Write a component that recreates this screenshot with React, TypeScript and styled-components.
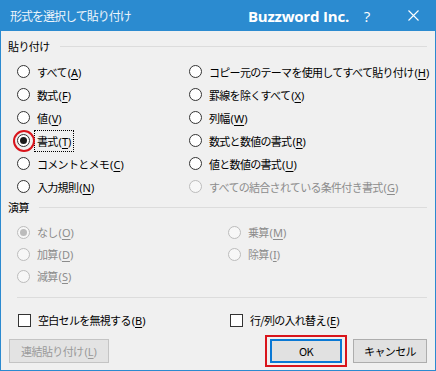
import React from 'react'
import styled, { createGlobalStyle } from 'styled-components'

const GlobalStyle = createGlobalStyle`
  body {
    margin: 0;
    background: #ffffff;
    font-family: "Noto Sans CJK JP", "Noto Sans", sans-serif;
  }
`

const Dialog = styled.div`
  width: 436px;
  height: 371px;
  box-sizing: border-box;
  border: 1px solid #2b8ad0;
  border-top: none;
  background: #f0f0f0;
  display: flex;
  flex-direction: column;
`

const TitleBar = styled.div`
  height: 31px;
  margin: 0 -1px;
  background: #2b8bd0;
  display: flex;
  align-items: center;
  padding: 0 0 0 10px;
  color: #ffffff;
`

const Title = styled.div`
  font-size: 12px;
  letter-spacing: -1px;
  color: #eef5fb;
  flex: 1;
`

const Brand = styled.div`
  font-family: "Open Sans", "Liberation Sans", sans-serif;
  font-weight: 700;
  font-size: 15px;
  letter-spacing: -0.2px;
  margin-right: 10px;
`

const TitleButton = styled.div<{ $w: number; $ml?: number }>`
  width: ${p => p.$w}px;
  margin-left: ${p => p.$ml ?? 0}px;
  height: 31px;
  display: flex;
  align-items: center;
  justify-content: center;
  font-family: "Open Sans", "Liberation Sans", sans-serif;
  font-size: 15px;
`

const Body = styled.div`
  flex: 1;
  display: flex;
  flex-direction: column;
  padding: 8px 8px 0 7px;
`

const SectionHead = styled.div<{ $top?: number }>`
  display: flex;
  align-items: center;
  height: 14px;
  margin-top: ${p => p.$top ?? 0}px;
  font-size: 11px;
  letter-spacing: -0.6px;
  color: #000;
  &::after {
    content: '';
    flex: 1;
    height: 1px;
    background: #dcdcdc;
    margin-left: 10px;
  }
`

const OptionGrid = styled.div<{ $col: number; $row: number; $rows: number }>`
  display: grid;
  grid-template-columns: ${p => p.$col}px 1fr;
  grid-template-rows: repeat(${p => p.$rows}, ${p => p.$row}px);
  grid-auto-flow: column;
  padding-left: 9px;
  margin-top: 7px;
`

const Option = styled.div<{ $disabled?: boolean }>`
  display: flex;
  align-items: center;
  gap: 7px;
  font-size: 11px;
  letter-spacing: -0.7px;
  color: ${p => (p.$disabled ? '#8c8c8c' : '#000')};
  white-space: nowrap;
`

const Key = styled.span`
  font-family: "Noto Sans", "Liberation Sans", sans-serif;
  letter-spacing: 0;
  margin-left: 1px;
  u {
    text-decoration-thickness: 1px;
    text-underline-offset: 2px;
  }
`

const Radio = styled.span<{ $checked?: boolean; $disabled?: boolean; $ring?: boolean }>`
  position: relative;
  flex: none;
  width: 13px;
  height: 13px;
  box-sizing: border-box;
  border-radius: 50%;
  border: 1px solid ${p => (p.$disabled ? '#bcbcbc' : '#333333')};
  background: ${p => (p.$disabled ? '#f7f7f7' : '#ffffff')};
  &::after {
    content: '';
    display: ${p => (p.$checked ? 'block' : 'none')};
    position: absolute;
    inset: 2px;
    border-radius: 50%;
    background: ${p => (p.$disabled ? '#bcbcbc' : '#1a1a1a')};
  }
  &::before {
    content: '';
    display: ${p => (p.$ring ? 'block' : 'none')};
    position: absolute;
    left: 50%;
    top: 50%;
    width: 22px;
    height: 22px;
    box-sizing: border-box;
    transform: translate(-50%, -50%);
    border: 2px solid #d9141b;
    border-radius: 50%;
  }
`

const Check = styled.span`
  flex: none;
  width: 13px;
  height: 13px;
  box-sizing: border-box;
  border: 1px solid #333333;
  background: #ffffff;
`

const Label = styled.span<{ $focus?: boolean }>`
  ${p => (p.$focus ? 'outline: 1px dotted #000; outline-offset: 2px;' : '')}
`

const Separator = styled.div`
  height: 1px;
  background: #dcdcdc;
  margin: 10px 0 0 9px;
`

const CheckRow = styled.div`
  display: grid;
  grid-template-columns: 212px 1fr;
  padding-left: 10px;
  margin-top: 14px;
  height: 16px;
`

const ButtonRow = styled.div`
  display: flex;
  align-items: center;
  margin-top: 7px;
  padding-left: 1px;
`

const Button = styled.button<{ $w: number; $disabled?: boolean; $default?: boolean }>`
  width: ${p => p.$w}px;
  height: 24px;
  box-sizing: border-box;
  font-family: "Noto Sans CJK JP", "Noto Sans", sans-serif;
  font-size: 11px;
  letter-spacing: -0.6px;
  padding: 0;
  background: ${p => (p.$disabled ? '#e3e3e3' : '#e1e1e1')};
  color: ${p => (p.$disabled ? '#9a9a9a' : '#000')};
  border: ${p => (p.$default ? '2px solid #0a78d4' : p.$disabled ? '1px solid #c4c4c4' : '1px solid #adadad')};
`

const Spacer = styled.div`
  flex: 1;
`

const Highlight = styled.div`
  padding: 2px 3px;
  border: 2px solid #d9141b;
  margin-right: 6px;
  display: flex;
`

type Item = { text: string; key: string; checked?: boolean; disabled?: boolean; ring?: boolean; focus?: boolean }

const paste: Item[] = [
  { text: 'すべて', key: 'A' },
  { text: '数式', key: 'F' },
  { text: '値', key: 'V' },
  { text: '書式', key: 'T', checked: true, ring: true, focus: true },
  { text: 'コメントとメモ', key: 'C' },
  { text: '入力規則', key: 'N' },
  { text: 'コピー元のテーマを使用してすべて貼り付け', key: 'H' },
  { text: '罫線を除くすべて', key: 'X' },
  { text: '列幅', key: 'W' },
  { text: '数式と数値の書式', key: 'R' },
  { text: '値と数値の書式', key: 'U' },
  { text: 'すべての結合されている条件付き書式', key: 'G', disabled: true },
]

const ops: Item[] = [
  { text: 'なし', key: 'O', checked: true, disabled: true },
  { text: '加算', key: 'D', disabled: true },
  { text: '減算', key: 'S', disabled: true },
  { text: '乗算', key: 'M', disabled: true },
  { text: '除算', key: 'I', disabled: true },
]

function AccessKey({ k }: { k: string }) {
  return (
    <Key>
      (<u>{k}</u>)
    </Key>
  )
}

function RadioOption({ item }: { item: Item }) {
  return (
    <Option $disabled={item.disabled}>
      <Radio $checked={item.checked} $disabled={item.disabled} $ring={item.ring} />
      <Label $focus={item.focus}>
        {item.text}
        <AccessKey k={item.key} />
      </Label>
    </Option>
  )
}

function App() {
  return (
    <Dialog>
      <GlobalStyle />
      <TitleBar>
        <Title>形式を選択して貼り付け</Title>
        <Brand>Buzzword Inc.</Brand>
        <TitleButton $w={16}>?</TitleButton>
        <TitleButton $w={46} $ml={15}>
          <svg width="11" height="11" viewBox="0 0 11 11">
            <path d="M0.5 0.5 L10.5 10.5 M10.5 0.5 L0.5 10.5" stroke="#ffffff" strokeWidth="1.1" />
          </svg>
        </TitleButton>
      </TitleBar>
      <Body>
        <SectionHead>貼り付け</SectionHead>
        <OptionGrid $col={172} $row={23} $rows={6}>
          {paste.map(item => (
            <RadioOption key={item.key} item={item} />
          ))}
        </OptionGrid>
        <SectionHead $top={2}>演算</SectionHead>
        <OptionGrid $col={211} $row={22} $rows={3}>
          {ops.map(item => (
            <RadioOption key={item.key} item={item} />
          ))}
        </OptionGrid>
        <Separator />
        <CheckRow>
          <Option>
            <Check />
            <span>
              空白セルを無視する
              <AccessKey k="B" />
            </span>
          </Option>
          <Option>
            <Check />
            <span>
              行/列の入れ替え
              <AccessKey k="E" />
            </span>
          </Option>
        </CheckRow>
        <ButtonRow>
          <Button $w={100} $disabled>
            連結貼り付け
            <AccessKey k="L" />
          </Button>
          <Spacer />
          <Highlight>
            <Button $w={72} $default>
              OK
            </Button>
          </Highlight>
          <Button $w={74}>キャンセル</Button>
        </ButtonRow>
      </Body>
    </Dialog>
  )
}

export default App
